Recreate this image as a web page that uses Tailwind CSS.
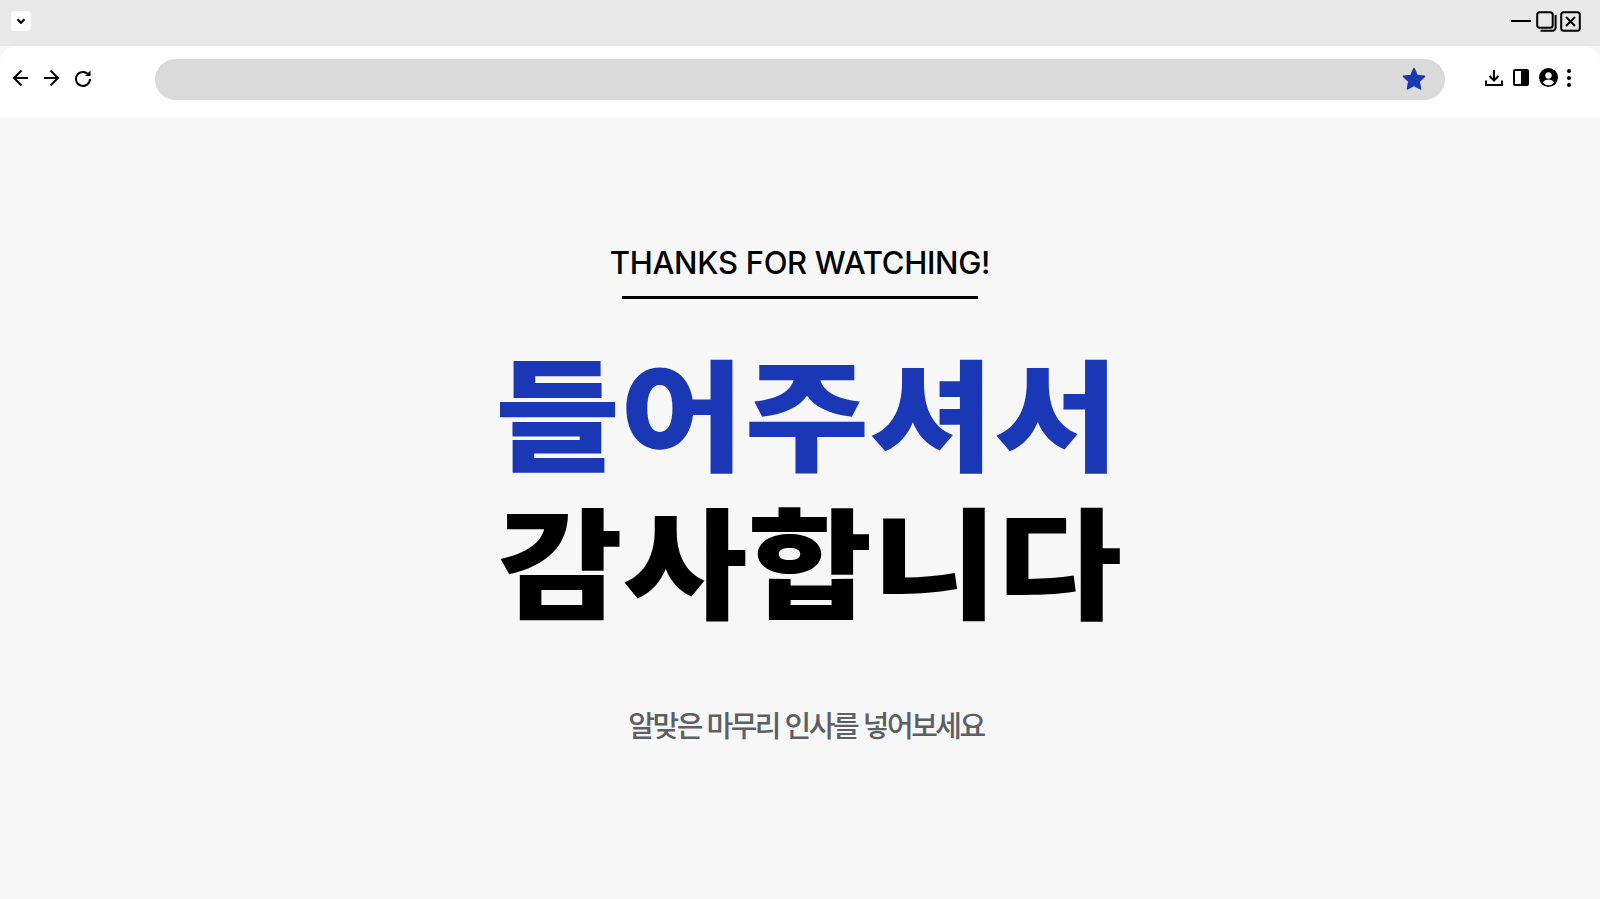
<!DOCTYPE html>
<html lang="ko">
<head>
  <meta charset="UTF-8">
  <meta name="viewport" content="width=device-width, initial-scale=1.0">
  <script src="https://cdn.jsdelivr.net/npm/@tailwindcss/browser@4"></script>
  <title>Thanks for watching</title>
</head>
<body class="h-[899px] overflow-hidden bg-[#f7f7f7] font-['Inter','Noto_Sans_CJK_KR',sans-serif]">
  <!-- tab strip -->
  <div class="h-[46px] bg-[#e8e8e8] flex items-start justify-between pl-[11px] pr-[19px]">
    <div class="mt-[11px] w-[20px] h-[20px] rounded-[4px] bg-white flex items-center justify-center">
      <svg class="w-[12px] h-[12px]" viewBox="0 0 12 12" fill="none" stroke="#000" stroke-width="2.2"><path d="M2.5 4.200 6 7.700l3.500-3.500"/></svg>
    </div>
    <div class="mt-[11px] flex items-center">
      <div class="w-[20px] h-[2px] bg-black mr-[5px] -mt-[2px]"></div>
      <svg class="w-[21px] h-[21px] mr-[3px]" viewBox="0 0 21 21" fill="none" stroke="#000" stroke-width="2"><rect x="1.200" y="1.200" width="15.500" height="15.500" rx="2.500"/><path d="M19.600 4v12.500a3.200 3.200 0 0 1-3.200 3.200H4.500"/></svg>
      <svg class="w-[21px] h-[21px]" viewBox="0 0 21 21" fill="none" stroke="#000" stroke-width="2"><rect x="1.200" y="1.200" width="18.600" height="18.600" rx="2.500"/><path d="m6 6 9 9M15 6l-9 9"/></svg>
    </div>
  </div>
  <!-- toolbar -->
  <div class="h-[72px] bg-white rounded-t-[16px] flex items-center pl-[12px] pr-[24px] pb-[6px]">
    <div class="flex items-center gap-[14px] w-[143px] mb-[3px]">
      <svg class="w-[17px] h-[18px]" viewBox="0 0 17 18" fill="none" stroke="#000" stroke-width="2"><path d="M16 9H2M9.500 1.500 2 9l7.500 7.500"/></svg>
      <svg class="w-[17px] h-[18px]" viewBox="0 0 17 18" fill="none" stroke="#000" stroke-width="2"><path d="M1 9h14M7.500 1.500 15 9l-7.500 7.500"/></svg>
      <svg class="w-[18px] h-[18px]" viewBox="0 0 18 18" fill="none" stroke="#000" stroke-width="2"><path d="M14.800 6A7 7 0 1 0 16 10"/><path d="M16.500 1.500 16.500 7 11 7Z" fill="#000" stroke="none"/></svg>
    </div>
    <div class="w-[1290px] h-[41px] rounded-full bg-[#dadada] flex items-center justify-end pr-[18px]">
      <svg class="w-[26px] h-[26px]" viewBox="0 0 24 24" fill="#1a38b5" stroke="#1a38b5" stroke-width="1.500" stroke-linejoin="round"><path d="m12 2.500 2.900 6.300 6.800.8-5 4.700 1.300 6.800-6-3.400-6 3.400 1.300-6.800-5-4.700 6.800-.8z"/></svg>
    </div>
    <div class="ml-[40px] flex items-center mb-[3px]">
      <svg class="w-[18px] h-[18px] mr-[10px]" viewBox="0 0 18 18" fill="none" stroke="#000" stroke-width="2"><path d="M9 1v10M4.500 7 9 11.500 13.500 7M1 11.500V16h16v-4.500"/></svg>
      <div class="w-[16px] h-[17px] rounded-[2px] border-2 border-black bg-[linear-gradient(to_right,#fff_50%,#000_50%)] mr-[10px]"></div>
      <svg class="w-[19px] h-[19px] mr-[9px]" viewBox="0 0 19 19"><circle cx="9.500" cy="9.500" r="9.500" fill="#000"/><circle cx="9.500" cy="7.500" r="3.200" fill="#fff"/><path d="M3.800 14.500c1.200-2 3.400-3 5.700-3s4.500 1 5.700 3a7.300 7.300 0 0 1-11.400 0z" fill="#fff"/></svg>
      <div class="flex flex-col gap-[3px]">
        <span class="w-[4px] h-[4px] rounded-full bg-black"></span>
        <span class="w-[4px] h-[4px] rounded-full bg-black"></span>
        <span class="w-[4px] h-[4px] rounded-full bg-black"></span>
      </div>
    </div>
  </div>
  <!-- slide -->
  <main class="flex flex-col items-center">
    <h2 class="mt-[125px] text-[31px] leading-[40px] font-medium tracking-[-0.3px] text-black">THANKS FOR WATCHING!</h2>
    <div class="mt-[13px] w-[356px] h-[3px] bg-black"></div>
    <h1 class="mt-[37px] ml-[14px] text-[120px] leading-[148px] font-black scale-x-[1.13] text-[#1a38b5] font-['Noto_Sans_CJK_KR',sans-serif]">들어주셔서</h1>
    <p class="ml-[20px] text-[120px] leading-[148px] font-black scale-x-[1.13] text-black font-['Noto_Sans_CJK_KR',sans-serif]">감사합니다</p>
    <p class="mt-[72px] ml-[12px] text-[29px] leading-[40px] font-medium tracking-[-2.5px] text-[#5c5f63] font-['Noto_Sans_CJK_KR',sans-serif]">알맞은 마무리 인사를 넣어보세요</p>
  </main>
</body>
</html>
